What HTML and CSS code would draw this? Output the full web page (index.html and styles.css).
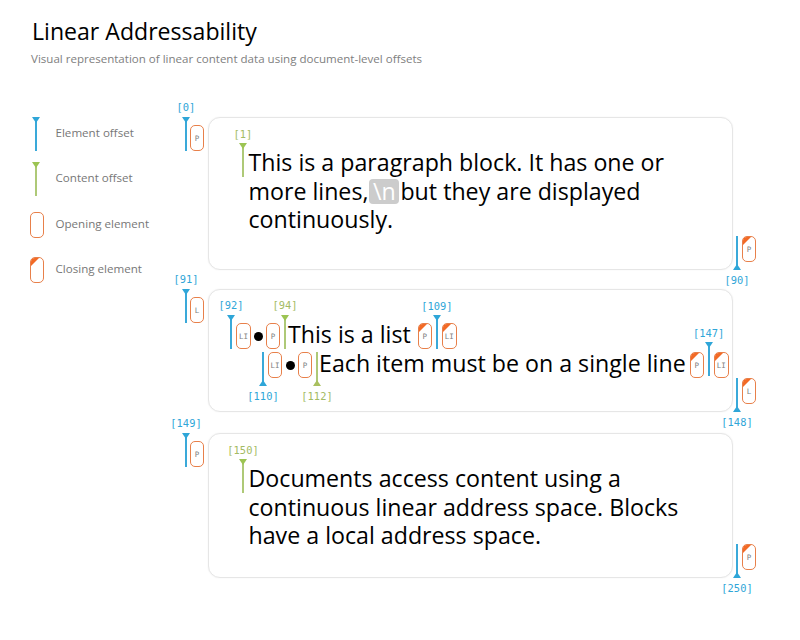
FILE: index.html
```html
<!DOCTYPE html>
<html lang="en">
<head>
<meta charset="utf-8">
<title>Linear Addressability</title>
<link rel="stylesheet" href="styles.css">
</head>
<body>
<header class="head">
  <h1 class="title">Linear Addressability</h1>
  <p class="subtitle">Visual representation of linear content data using document-level offsets</p>
</header>
<main class="layout">
  <ul class="legend">
    <li class="legend-item"><span class="legend-icon"><span class="mark el down static"></span></span>Element offset</li>
    <li class="legend-item"><span class="legend-icon"><span class="mark ct down static"></span></span>Content offset</li>
    <li class="legend-item"><span class="legend-icon"><span class="pill"></span></span>Opening element</li>
    <li class="legend-item"><span class="legend-icon"><span class="pill close"></span></span>Closing element</li>
  </ul>
  <div class="diagram">
    <section class="block block-p1">
      <span class="mark el down outer-mark"><span class="lab">[0]</span></span>
      <span class="pill outer-pill">P</span>
      <span class="mark ct down inner-mark"><span class="lab">[1]</span></span>
      <p class="text">This is a paragraph block. It has one or more lines,<span class="chip">\n</span>but they are displayed continuously.</p>
      <span class="mark el up end-mark"><span class="lab">[90]</span></span>
      <span class="pill close end-pill">P</span>
    </section>
    <section class="block block-list">
      <span class="mark el down outer-mark"><span class="lab">[91]</span></span>
      <span class="pill outer-pill">L</span>
      <div class="row row-1">
        <span class="mark el down flow"><span class="lab">[92]</span></span>
        <span class="pill li">LI</span>
        <span class="bullet"></span>
        <span class="pill">P</span>
        <span class="mark ct down flow"><span class="lab">[94]</span></span>
        <span class="line">This is a list</span>
        <span class="pill close">P</span>
        <span class="mark el down flow end-flow"><span class="lab">[109]</span></span>
        <span class="pill close li">LI</span>
      </div>
      <div class="row row-2">
        <span class="mark el up flow"><span class="lab">[110]</span></span>
        <span class="pill">LI</span>
        <span class="bullet"></span>
        <span class="pill">P</span>
        <span class="mark ct up flow"><span class="lab">[112]</span></span>
        <span class="line">Each item must be on a single line</span>
        <span class="pill close">P</span>
        <span class="mark el down flow end-flow"><span class="lab">[147]</span></span>
        <span class="pill close li">LI</span>
      </div>
      <span class="mark el up end-mark"><span class="lab">[148]</span></span>
      <span class="pill close end-pill">L</span>
    </section>
    <section class="block block-p2">
      <span class="mark el down outer-mark"><span class="lab">[149]</span></span>
      <span class="pill outer-pill">P</span>
      <span class="mark ct down inner-mark"><span class="lab">[150]</span></span>
      <p class="text">Documents access content using a continuous linear address space. Blocks have a local address space.</p>
      <span class="mark el up end-mark"><span class="lab">[250]</span></span>
      <span class="pill close end-pill">P</span>
    </section>
  </div>
</main>
</body>
</html>
```
FILE: styles.css
```css
* { box-sizing: border-box; }
html, body { margin: 0; padding: 0; background: #fff; }
body {
  width: 800px;
  height: 640px;
  overflow: hidden;
  font-family: "Open Sans", sans-serif;
  color: #000;
}
.head { padding: 15px 0 0 32px; }
.title { margin: 0; font-size: 23.1px; line-height: 32px; font-weight: 400; }
.subtitle { margin: 4px 0 0 -1px; font-size: 11.55px; line-height: 16px; color: #808080; }

.layout { display: flex; padding: 50px 0 0 30px; }
.legend {
  list-style: none;
  margin: 0;
  padding: 0;
  width: 178px;
  display: flex;
  flex-direction: column;
  gap: 11.3px;
}
.legend-item {
  display: flex;
  align-items: center;
  height: 34px;
  padding-bottom: 2px;
  font-size: 11.6px;
  color: #777;
}
.legend-item:nth-child(-n+2) { padding-bottom: 4px; }
.legend-item:nth-child(-n+2) .legend-icon { margin-bottom: -4px; }
.legend-icon { width: 25.5px; margin-bottom: -2px; display: flex; justify-content: flex-start; }
.legend-icon .static { margin-left: 5px; }

/* offset markers */
.mark { display: block; width: 2px; height: 34px; background: #3aa9d9; position: absolute; }
.mark.ct { background: #aec977; }
.mark.static { position: relative; }
.mark::before {
  content: "";
  position: absolute;
  left: -3px;
  width: 0;
  height: 0;
  border-left: 4px solid transparent;
  border-right: 4px solid transparent;
}
.mark.down::before { top: 0; border-top: 6px solid #2fa6d8; }
.mark.up::before { bottom: 0; border-bottom: 6px solid #2fa6d8; }
.mark.ct.down::before { border-top-color: #9cc453; }
.mark.ct.up::before { border-bottom-color: #a9c05f; }
.lab {
  position: absolute;
  left: 1px;
  transform: translateX(-50%);
  font-family: "DejaVu Sans Mono", monospace;
  font-size: 10.4px;
  line-height: 12px;
  color: #2fa6d8;
  white-space: nowrap;
}
.mark.ct .lab { color: #a3bb63; }
.mark.down .lab { top: -16px; }
.mark.inner-mark .lab { top: -15px; }
.mark.end-flow .lab { top: -15px; }
.mark.up .lab { bottom: -16px; }

/* element pills */
.pill {
  display: flex;
  align-items: center;
  justify-content: center;
  flex: none;
  width: 14px;
  height: 26px;
  border: 1px solid #e8804a;
  border-radius: 5px;
  font-family: "DejaVu Sans Mono", monospace;
  font-size: 7.5px;
  color: #808080;
  background: #fff;
  overflow: hidden;
  position: relative;
}
.pill.li { width: 15px; }
.pill.close::before {
  content: "";
  position: absolute;
  left: 0;
  top: 0;
  width: 0;
  height: 0;
  border-top: 8px solid #f26a26;
  border-right: 8px solid transparent;
}

/* blocks */
.diagram { width: 525px; display: flex; flex-direction: column; }
.block {
  position: relative;
  border: 1px solid #e6e6e6;
  border-radius: 12px;
  box-shadow: 0 0 2px rgba(0, 0, 0, 0.06);
  background: #fff;
}
.block-p1 { height: 153px; padding: 30px 40px 0 39.5px; }
.block-list { height: 123px; margin-top: 19px; padding-top: 33px; }
.block-p2 { height: 145px; margin-top: 21px; padding: 30px 40px 0 39.5px; }
.text { margin: 0; font-size: 23.2px; line-height: 28.6px; }
.chip {
  display: inline-block;
  width: 30px;
  height: 25px;
  margin: 0 1px 0 1px;
  background: #ccc;
  border-radius: 4px;
  color: #fff;
  font-size: 23.2px;
  line-height: 25px;
  text-align: center;
}
.outer-mark { left: -24px; top: -1px; }
.outer-pill { position: absolute; left: -19px; top: 7px; }
.inner-mark { left: 33px; top: 25px; }
.end-mark { right: -6px; bottom: -1px; }
.end-pill { position: absolute; right: -24px; bottom: 7px; }

/* list rows */
.row { display: flex; align-items: center; height: 26px; }
.row + .row { margin-top: 3px; }
.row-1 { padding-left: 21px; }
.row-2 { padding-left: 53px; }
.mark.flow { position: relative; flex: none; margin: 0 4px 0 0; }
.row-1 .mark.flow { align-self: flex-end; }
.row-1 .mark.ct { margin: 0 2px 0 4px; }
.row-2 .mark.flow.up { align-self: flex-start; }
.row-2 .mark.ct { margin: 0 1px 0 4px; }
.mark.flow.end-flow { margin: 0 4px; }
.row-2 .mark.flow.end-flow { align-self: flex-end; margin-bottom: 2px; }
.bullet { flex: none; width: 9px; height: 9px; margin: 0 3px 0 3px; border-radius: 50%; background: #000; }
.row-2 .bullet { margin-left: 4px; }
.line { font-size: 23.2px; line-height: 26px; padding-bottom: 4px; white-space: nowrap; margin-right: 4px; }
.row-1 .line { margin-right: 7px; }
```
